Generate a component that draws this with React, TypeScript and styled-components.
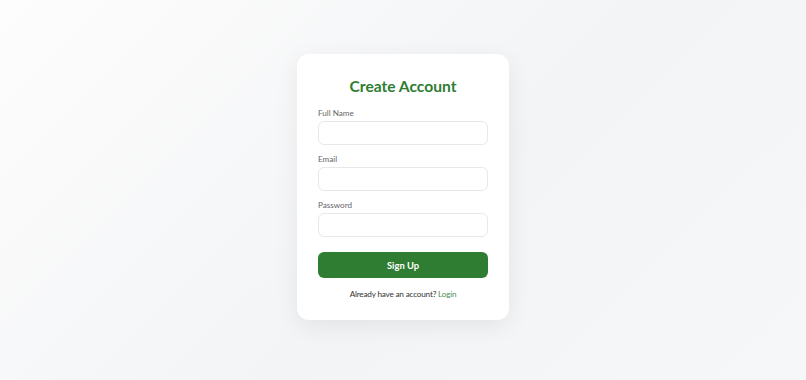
import React from 'react';
import styled, { createGlobalStyle } from 'styled-components';

const GlobalStyle = createGlobalStyle`
  * {
    box-sizing: border-box;
  }
  body {
    margin: 0;
    font-family: Lato, "Noto Sans", sans-serif;
    background: linear-gradient(135deg, #fdfdfd 0%, #f3f4f6 55%, #f6f7f8 100%);
  }
`;

const Page = styled.div`
  min-height: 100vh;
  display: flex;
  align-items: center;
  justify-content: center;
  padding-bottom: 6px;
`;

const Card = styled.form`
  width: 212px;
  padding: 21px 21px 20px;
  background: #ffffff;
  border-radius: 12px;
  box-shadow: 0 6px 24px rgba(0, 0, 0, 0.07);
  display: flex;
  flex-direction: column;
`;

const Title = styled.h2`
  margin: 0 0 10px;
  font-size: 15.6px;
  line-height: 22px;
  font-weight: 700;
  color: #2e7d32;
  text-align: center;
`;

const Field = styled.div`
  display: flex;
  flex-direction: column;
  gap: 2px;
  margin-bottom: 8px;

  &:last-of-type {
    margin-bottom: 15px;
  }
`;

const Label = styled.label`
  font-size: 8.1px;
  line-height: 12px;
  color: #666;
`;

const Input = styled.input`
  height: 24px;
  width: 100%;
  border: 1px solid #e8e8e8;
  border-radius: 6px;
  padding: 0 8px;
  font-family: inherit;
  font-size: 9px;
  outline: none;
`;

const Button = styled.button`
  height: 26px;
  width: 100%;
  border: none;
  border-radius: 6px;
  background: #2e7d32;
  color: #ffffff;
  font-family: inherit;
  font-size: 9.4px;
  font-weight: 700;
  cursor: pointer;
`;

const Footer = styled.p`
  margin: 10px 0 0;
  font-size: 8.2px;
  line-height: 12px;
  letter-spacing: -0.2px;
  color: #333;
  text-align: center;

  a {
    color: #4c8f50;
    text-decoration: none;
  }
`;

const fields = [
  { id: 'name', label: 'Full Name', type: 'text' },
  { id: 'email', label: 'Email', type: 'email' },
  { id: 'password', label: 'Password', type: 'password' },
];

export default function App() {
  return (
    <>
      <GlobalStyle />
      <Page>
        <Card onSubmit={(e) => e.preventDefault()}>
          <Title>Create Account</Title>
          {fields.map((f) => (
            <Field key={f.id}>
              <Label htmlFor={f.id}>{f.label}</Label>
              <Input id={f.id} type={f.type} />
            </Field>
          ))}
          <Button type="submit">Sign Up</Button>
          <Footer>
            Already have an account? <a href="#">Login</a>
          </Footer>
        </Card>
      </Page>
    </>
  );
}
